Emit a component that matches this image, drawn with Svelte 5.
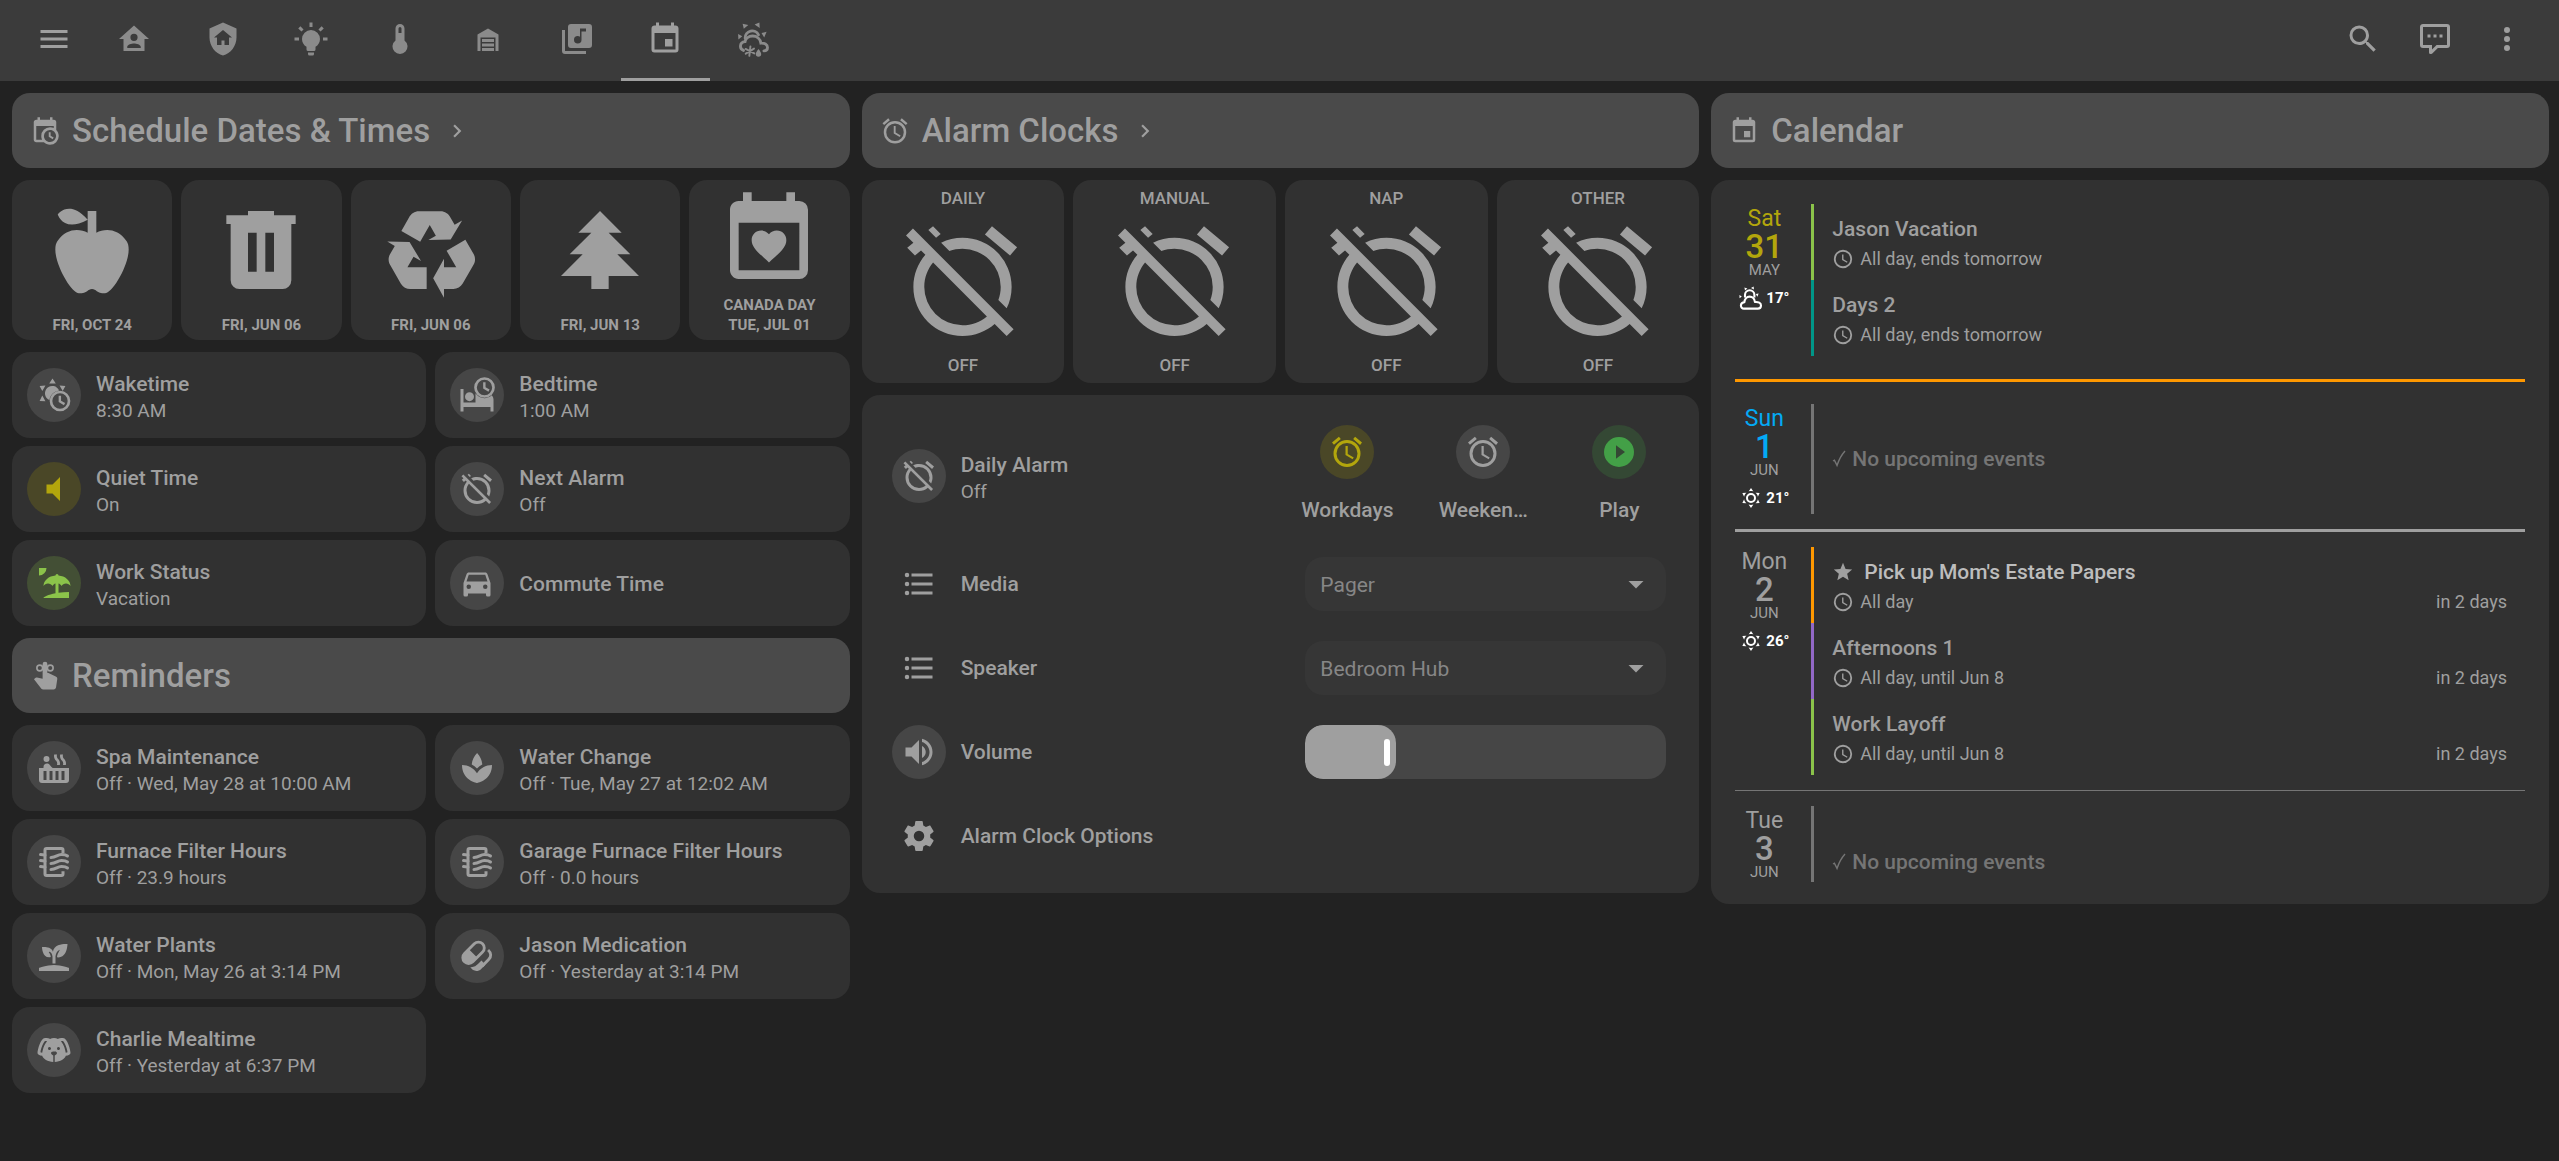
<script>
  const icons = {
    menu: 'M3,6H21V8H3V6M3,11H21V13H3V11M3,16H21V18H3V16Z',
    home: 'M12,3L2,12H5V20H19V12H22L12,3M12,8.5A2.4,2.4 0 0,1 14.4,10.9A2.4,2.4 0 0,1 12,13.3A2.4,2.4 0 0,1 9.6,10.9A2.4,2.4 0 0,1 12,8.5M12,15C13.5,15 16.5,15.75 16.5,17.25V18H7.5V17.25C7.5,15.75 10.5,15 12,15Z',
    shield: 'M11,13H13V16H16V11H18L12,6L6,11H8V16H11V13M12,1L21,5V11C21,16.55 17.16,21.74 12,23C6.84,21.74 3,16.55 3,11V5L12,1Z',
    bulb: 'M12,6A6,6 0 0,1 18,12C18,14.22 16.79,16.16 15,17.2V19A1,1 0 0,1 14,20H10A1,1 0 0,1 9,19V17.2C7.21,16.16 6,14.22 6,12A6,6 0 0,1 12,6M14,21V22A1,1 0 0,1 13,23H11A1,1 0 0,1 10,22V21H14M20,11H23V13H20V11M1,11H4V13H1V11M13,1V4H11V1H13M4.92,3.5L7.05,5.64L5.63,7.05L3.5,4.93L4.92,3.5M16.95,5.63L19.07,3.5L20.5,4.93L18.37,7.05L16.95,5.63Z',
    thermometer: 'M15 13V5A3 3 0 0 0 9 5V13A5 5 0 1 0 15 13M12 4A1 1 0 0 1 13 5V8H11V5A1 1 0 0 1 12 4Z',
    garage: 'M19,20H17V11H7V20H5V9L12,5L19,9V20M8,12H16V14H8V12M8,15H16V17H8V15M16,18V20H8V18H16Z',
    music: 'M4,6H2V20A2,2 0 0,0 4,22H18V20H4V6M20,2H8A2,2 0 0,0 6,4V16A2,2 0 0,0 8,18H20A2,2 0 0,0 22,16V4A2,2 0 0,0 20,2M18,7H15V12.5A2.5,2.5 0 0,1 12.5,15A2.5,2.5 0 0,1 10,12.5A2.5,2.5 0 0,1 12.5,10C13.07,10 13.58,10.19 14,10.5V5H18V7Z',
    calendar: 'M19,19H5V8H19M16,1V3H8V1H6V3H5C3.89,3 3,3.89 3,5V19A2,2 0 0,0 5,21H19A2,2 0 0,0 21,19V5C21,3.89 20.1,3 19,3H18V1M17,12H12V17H17V12Z',
    calendarClock: 'M15,13H16.5V15.82L18.94,17.23L18.19,18.53L15,16.69V13M19,8H5V19H9.67C9.24,18.09 9,17.07 9,16A7,7 0 0,1 16,9C17.07,9 18.09,9.24 19,9.67V8M5,21C3.89,21 3,20.1 3,19V5C3,3.89 3.89,3 5,3H6V1H8V3H16V1H18V3H19A2,2 0 0,1 21,5V11.1C22.24,12.36 23,14.09 23,16A7,7 0 0,1 16,23C14.09,23 12.36,22.24 11.1,21H5M16,11.15A4.85,4.85 0 0,0 11.15,16C11.15,18.68 13.32,20.85 16,20.85A4.85,4.85 0 0,0 20.85,16C20.85,13.32 18.68,11.15 16,11.15Z',
    magnify: 'M9.5,3A6.5,6.5 0 0,1 16,9.5C16,11.11 15.41,12.59 14.44,13.73L14.71,14H15.5L20.5,19L19,20.5L14,15.5V14.71L13.73,14.44C12.59,15.41 11.11,16 9.5,16A6.5,6.5 0 0,1 3,9.5A6.5,6.5 0 0,1 9.5,3M9.5,5C7,5 5,7 5,9.5C5,12 7,14 9.5,14C12,14 14,12 14,9.5C14,7 12,5 9.5,5Z',
    comment: 'M9,22A1,1 0 0,1 8,21V18H4A2,2 0 0,1 2,16V4C2,2.89 2.9,2 4,2H20A2,2 0 0,1 22,4V16A2,2 0 0,1 20,18H13.9L10.2,21.71C10,21.9 9.75,22 9.5,22H9M10,16V19.08L13.08,16H20V4H4V16H10M17,11H15V9H17V11M13,11H11V9H13V11M9,11H7V9H9V11Z',
    dots: 'M12,16A2,2 0 0,1 14,18A2,2 0 0,1 12,20A2,2 0 0,1 10,18A2,2 0 0,1 12,16M12,10A2,2 0 0,1 14,12A2,2 0 0,1 12,14A2,2 0 0,1 10,12A2,2 0 0,1 12,10M12,4A2,2 0 0,1 14,6A2,2 0 0,1 12,8A2,2 0 0,1 10,6A2,2 0 0,1 12,4Z',
    chevron: 'M8.59,16.58L13.17,12L8.59,7.41L10,6L16,12L10,18L8.59,16.58Z',
    apple: 'M20,10C22,13 17,22 15,22C13,22 13,21 12,21C11,21 11,22 9,22C7,22 2,13 4,10C6,7 9,7 11,8V5C5.38,8.07 4.11,3.78 4.11,3.78C4.11,3.78 6.77,0.19 11,5V3H13V8C15,7 18,7 20,10Z',
    trash: 'M9,3V4H4V6H5V19A2,2 0 0,0 7,21H17A2,2 0 0,0 19,19V6H20V4H15V3H9M9,8H11V17H9V8M13,8H15V17H13V8Z',
    recycle: 'M21.82,15.42L19.32,19.75C18.83,20.61 17.92,21.06 17,21H15V23L12.5,18.5L15,14V16H17.82L15.6,12.15L19.93,9.65L21.73,12.77C22.25,13.54 22.32,14.57 21.82,15.42M9.21,3.06H14.21C15.19,3.06 16.04,3.63 16.45,4.45L17.45,6.19L19.18,5.19L16.54,9.6L11.39,9.69L13.12,8.69L11.71,6.24L9.5,10.09L5.16,7.59L6.96,4.47C7.37,3.64 8.22,3.06 9.21,3.06M5.05,19.76L2.55,15.43C2.06,14.58 2.13,13.56 2.64,12.79L3.64,11.06L1.91,10.06L7.05,10.14L9.7,14.56L7.97,13.56L6.56,16H11V21H7.4C6.47,21.07 5.55,20.61 5.05,19.76Z',
    pine: 'M10,21V18H3L8,13H5L10,8H7L12,3L17,8H14L19,13H16L21,18H14V21H10Z',
    calendarHeart: 'M19,19V8H5V19H19M16,1H18V3H19A2,2 0 0,1 21,5V19A2,2 0 0,1 19,21H5C3.89,21 3,20.1 3,19V5C3,3.89 3.89,3 5,3H6V1H8V3H16V1M12,17.17L11.42,16.64C9.36,14.77 8,13.54 8,12.03C8,10.8 8.97,9.83 10.2,9.83C10.9,9.83 11.56,10.15 12,10.66C12.44,10.15 13.1,9.83 13.8,9.83C15.03,9.83 16,10.8 16,12.03C16,13.54 14.64,14.77 12.58,16.64L12,17.17Z',
    alarm: 'M12,20A7,7 0 0,1 5,13A7,7 0 0,1 12,6A7,7 0 0,1 19,13A7,7 0 0,1 12,20M12,4A9,9 0 0,0 3,13A9,9 0 0,0 12,22A9,9 0 0,0 21,13A9,9 0 0,0 12,4M12.5,8H11V14L15.75,16.85L16.5,15.62L12.5,13.25V8M7.88,3.39L6.6,1.86L2,5.71L3.29,7.24L7.88,3.39M22,5.72L17.4,1.86L16.11,3.39L20.71,7.25L22,5.72Z',
    alarmOff: 'M8,3.28L6.6,1.86L5.74,2.57L7.16,4M16.47,18.39C15.26,19.39 13.7,20 12,20A7,7 0 0,1 5,13C5,11.3 5.61,9.74 6.61,8.53M2.92,2.29L1.65,3.57L3,4.9L1.87,5.83L3.29,7.25L4.4,6.31L5.2,7.11C3.83,8.69 3,10.75 3,13A9,9 0 0,0 12,22C14.25,22 16.31,21.17 17.89,19.8L20.09,22L21.36,20.73L3.89,3.27L2.92,2.29M22,5.72L17.4,1.86L16.11,3.39L20.71,7.25L22,5.72M12,6A7,7 0 0,1 19,13C19,13.84 18.84,14.65 18.57,15.4L20.09,16.92C20.67,15.73 21,14.4 21,13A9,9 0 0,0 12,4C10.6,4 9.27,4.33 8.08,4.91L9.6,6.43C10.35,6.16 11.16,6 12,6Z',
    play: 'M10,16.5V7.5L16,12M12,2A10,10 0 0,0 2,12A10,10 0 0,0 12,22A10,10 0 0,0 22,12A10,10 0 0,0 12,2Z',
    list: 'M7,5H21V7H7V5M7,13V11H21V13H7M4,4.5A1.5,1.5 0 0,1 5.5,6A1.5,1.5 0 0,1 4,7.5A1.5,1.5 0 0,1 2.5,6A1.5,1.5 0 0,1 4,4.5M4,10.5A1.5,1.5 0 0,1 5.5,12A1.5,1.5 0 0,1 4,13.5A1.5,1.5 0 0,1 2.5,12A1.5,1.5 0 0,1 4,10.5M7,19V17H21V19H7M4,16.5A1.5,1.5 0 0,1 5.5,18A1.5,1.5 0 0,1 4,19.5A1.5,1.5 0 0,1 2.5,18A1.5,1.5 0 0,1 4,16.5Z',
    volumeHigh: 'M14,3.23V5.29C16.89,6.15 19,8.83 19,12C19,15.17 16.89,17.84 14,18.7V20.77C18,19.86 21,16.28 21,12C21,7.72 18,4.14 14,3.23M16.5,12C16.5,10.23 15.5,8.71 14,7.97V16C15.5,15.29 16.5,13.76 16.5,12M3,9V15H7L12,20V4L7,9H3Z',
    volumeLow: 'M7,9V15H11L16,20V4L11,9H7Z',
    cog: 'M12,15.5A3.5,3.5 0 0,1 8.5,12A3.5,3.5 0 0,1 12,8.5A3.5,3.5 0 0,1 15.5,12A3.5,3.5 0 0,1 12,15.5M19.43,12.97C19.47,12.65 19.5,12.33 19.5,12C19.5,11.67 19.47,11.34 19.43,11L21.54,9.37C21.73,9.22 21.78,8.95 21.66,8.73L19.66,5.27C19.54,5.05 19.27,4.96 19.05,5.05L16.56,6.05C16.04,5.66 15.5,5.32 14.87,5.07L14.5,2.42C14.46,2.18 14.25,2 14,2H10C9.75,2 9.54,2.18 9.5,2.42L9.13,5.07C8.5,5.32 7.96,5.66 7.44,6.05L4.95,5.05C4.73,4.96 4.46,5.05 4.34,5.27L2.34,8.73C2.21,8.95 2.27,9.22 2.46,9.37L4.57,11C4.53,11.34 4.5,11.67 4.5,12C4.5,12.33 4.53,12.65 4.57,12.97L2.46,14.63C2.27,14.78 2.21,15.05 2.34,15.27L4.34,18.73C4.46,18.95 4.73,19.03 4.95,18.95L7.44,17.94C7.96,18.34 8.5,18.68 9.13,18.93L9.5,21.58C9.54,21.82 9.75,22 10,22H14C14.25,22 14.46,21.82 14.5,21.58L14.87,18.93C15.5,18.67 16.04,18.34 16.56,17.94L19.05,18.95C19.27,19.03 19.54,18.95 19.66,18.73L21.66,15.27C21.78,15.05 21.73,14.78 21.54,14.63L19.43,12.97Z',
    car: 'M5,11L6.5,6.5H17.5L19,11M17.5,16A1.5,1.5 0 0,1 16,14.5A1.5,1.5 0 0,1 17.5,13A1.5,1.5 0 0,1 19,14.5A1.5,1.5 0 0,1 17.5,16M6.5,16A1.5,1.5 0 0,1 5,14.5A1.5,1.5 0 0,1 6.5,13A1.5,1.5 0 0,1 8,14.5A1.5,1.5 0 0,1 6.5,16M18.92,6C18.72,5.42 18.16,5 17.5,5H6.5C5.84,5 5.28,5.42 5.08,6L3,12V20A1,1 0 0,0 4,21H5A1,1 0 0,0 6,20V19H18V20A1,1 0 0,0 19,21H20A1,1 0 0,0 21,20V12L18.92,6Z',
    beach: 'M15,18.54C17.13,18.21 19.5,18 22,18V22H5C5,21.35 8.2,19.86 13,18.9V12.4C12.16,12.65 11.45,13.21 11,13.95C10.39,12.93 9.27,12.25 8,12.25C6.73,12.25 5.61,12.93 5,13.95C5.03,10.37 8.5,7.43 13,7.04V7A1,1 0 0,1 14,6A1,1 0 0,1 15,7V7.04C19.5,7.43 22.96,10.37 23,13.95C22.39,12.93 21.27,12.25 20,12.25C18.73,12.25 17.61,12.93 17,13.95C16.55,13.21 15.84,12.65 15,12.39V18.54M7,2A5,5 0 0,1 2,7V2H7Z',
    hotTub: 'M7,4A2,2 0 0,1 9,6A2,2 0 0,1 7,8A2,2 0 0,1 5,6A2,2 0 0,1 7,4M11.15,12H22V20A2,2 0 0,1 20,22H4A2,2 0 0,1 2,20V12H5V11.25C5,10 6,9 7.25,9H7.28C7.62,9 7.95,9.09 8.24,9.23C8.5,9.35 8.74,9.5 8.93,9.73L10.33,11.28C10.56,11.54 10.84,11.78 11.15,12M7,20V14H5V20H7M11,20V14H9V20H11M15,20V14H13V20H15M19,20V14H17V20H19M18.65,5.86C19.68,6.86 20.16,8.21 19.95,9.57L19.89,10H18L18.09,9.41C18.24,8.62 18,7.83 17.42,7.21L17.35,7.15C16.32,6.14 15.85,4.79 16.05,3.43L16.11,3H18L17.91,3.59C17.76,4.38 18,5.17 18.58,5.79L18.65,5.86M14.65,5.86C15.68,6.86 16.16,8.21 15.95,9.57L15.89,10H14L14.09,9.41C14.24,8.62 14,7.83 13.42,7.21L13.35,7.15C12.32,6.14 11.85,4.79 12.05,3.43L12.11,3H14L13.91,3.59C13.76,4.38 14,5.17 14.58,5.79L14.65,5.86Z',
    spa: 'M15.5,9.63C15.31,6.84 14.18,4.12 12.06,2C9.92,4.14 8.74,6.86 8.5,9.63C9.79,10.31 10.97,11.19 12,12.26C13.03,11.2 14.21,10.32 15.5,9.63M12,15.45C9.85,12.17 6.18,10 2,10C2,20 11.32,21.89 12,22C12.68,21.88 22,20 22,10C17.82,10 14.15,12.17 12,15.45Z',
    sprout: 'M2,22V20C2,20 7,18 12,18C17,18 22,20 22,20V22H2M11.3,9.1C10.1,5.2 4,6.1 4,6.1C4,6.1 4.2,13.9 9.9,12.7C9.5,9.8 8,9 8,9C10.8,9 11,12.4 11,12.4V17C11.3,17 11.7,17 12,17C12.3,17 12.7,17 13,17V12.8C13,12.8 13,8.9 16,7.9C16,7.9 14,10.9 14,12.9C21,13.6 21,4 21,4C21,4 12.1,3 11.3,9.1Z',
    dog: 'M18,4C16.29,4 15.25,4.33 14.65,4.61C13.88,4.23 13,4 12,4C11,4 10.12,4.23 9.35,4.61C8.75,4.33 7.71,4 6,4C3,4 1,12 1,14C1,14.83 2.32,15.59 4.14,15.9C4.78,18.14 7.8,19.85 11.5,20V15.72C10.91,15.35 10,14.68 10,14C10,13 12,13 12,13C12,13 14,13 14,14C14,14.68 13.09,15.35 12.5,15.72V20C16.2,19.85 19.22,18.14 19.86,15.9C21.68,15.59 23,14.83 23,14C23,12 21,4 18,4M4.15,13.87C3.65,13.75 3.26,13.61 3,13.5C3.25,10.73 5.2,6.4 6.05,6C6.59,6 7,6.06 7.37,6.11C5.27,8.42 4.44,12.04 4.15,13.87M9,12A1,1 0 0,1 8,11C8,10.46 8.45,10 9,10A1,1 0 0,1 10,11C10,11.56 9.55,12 9,12M15,12A1,1 0 0,1 14,11C14,10.46 14.45,10 15,10A1,1 0 0,1 16,11C16,11.56 15.55,12 15,12M19.85,13.87C19.56,12.04 18.73,8.42 16.63,6.11C17,6.06 17.41,6 17.95,6C18.8,6.4 20.75,10.73 21,13.5C20.75,13.61 20.36,13.75 19.85,13.87Z',
    clock: 'M12,20A8,8 0 0,0 20,12A8,8 0 0,0 12,4A8,8 0 0,0 4,12A8,8 0 0,0 12,20M12,2A10,10 0 0,1 22,12A10,10 0 0,1 12,22C6.47,22 2,17.5 2,12A10,10 0 0,1 12,2M12.5,7V12.25L17,14.92L16.25,16.15L11,13V7H12.5Z',
    star: 'M12,17.27L18.18,21L16.54,13.97L22,9.24L14.81,8.62L12,2L9.19,8.62L2,9.24L7.45,13.97L5.82,21L12,17.27Z',
    arrow: 'M7,10L12,15L17,10H7Z',
    sunClock: 'M9,15.4A4.9,4.9 0 1,1 15.4,9A7,7 0 0,0 9,15.4M11,1L13.2,4.3H8.8L11,1M2.4,6L6.3,5.7L4.2,9.4L2.4,6M19.6,6L17.8,9.4L15.7,5.7L19.6,6M2.4,16L4.2,12.4L6.3,16.1L2.4,16M16,9.1A6.9,6.9 0 1,1 16,22.9A6.9,6.9 0 1,1 16,9.1M16,10.9A5.1,5.1 0 1,0 16,21.1A5.1,5.1 0 1,0 16,10.9M15.1,12.5H16.7V15.8L19.4,17.4L18.6,18.8L15.1,16.7V12.5Z',
    bedClock: 'M1,8H3V17H11V10.9A7,7 0 0,0 21.8,12.1C22.6,12.9 23,13.9 23,15V23H21V20H3V23H1V8M7,10.1A3,3 0 1,1 7,16.1A3,3 0 1,1 7,10.1M17,.1A6.9,6.9 0 1,1 17,13.9A6.9,6.9 0 1,1 17,.1M17,1.9A5.1,5.1 0 1,0 17,12.1A5.1,5.1 0 1,0 17,1.9M16.1,3.5H17.7V6.8L20.4,8.4L19.6,9.8L16.1,7.7V3.5Z',
    sunny: 'M12,7A5,5 0 0,1 17,12A5,5 0 0,1 12,17A5,5 0 0,1 7,12A5,5 0 0,1 12,7M12,9A3,3 0 0,0 9,12A3,3 0 0,0 12,15A3,3 0 0,0 15,12A3,3 0 0,0 12,9M12,2L14.39,5.42C13.65,5.15 12.84,5 12,5C11.16,5 10.35,5.15 9.61,5.42L12,2M3.34,7L7.5,6.65C6.9,7.16 6.36,7.78 5.94,8.5C5.5,9.24 5.25,10 5.11,10.79L3.34,7M3.36,17L5.12,13.23C5.26,14 5.53,14.78 5.95,15.5C6.37,16.24 6.91,16.86 7.5,17.37L3.36,17M20.65,7L18.88,10.79C18.74,10 18.47,9.23 18.05,8.5C17.63,7.78 17.1,7.15 16.5,6.64L20.65,7M20.64,17L16.5,17.36C17.09,16.85 17.62,16.22 18.04,15.5C18.46,14.77 18.73,14 18.87,13.21L20.64,17M12,22L9.59,18.56C10.33,18.83 11.14,19 12,19C12.82,19 13.63,18.83 14.37,18.56L12,22Z'
  };

  const tabs = [
    ['home', 'Home'],
    ['shield', 'Security'],
    ['bulb', 'Lights'],
    ['thermometer', 'Climate'],
    ['garage', 'Garage'],
    ['music', 'Media'],
    ['calendar', 'Schedule'],
    ['mixedWeather', 'Weather']
  ];
  let activeTab = $state('calendar');

  const dates = [
    { icon: 'apple', lines: ['FRI, OCT 24'] },
    { icon: 'trash', lines: ['FRI, JUN 06'] },
    { icon: 'recycle', lines: ['FRI, JUN 06'] },
    { icon: 'pine', lines: ['FRI, JUN 13'] },
    { icon: 'calendarHeart', lines: ['CANADA DAY', 'TUE, JUL 01'] }
  ];

  const times = [
    { icon: 'sunClock', name: 'Waketime', state: '8:30 AM' },
    { icon: 'bedClock', name: 'Bedtime', state: '1:00 AM' },
    { icon: 'volumeLow', name: 'Quiet Time', state: 'On', tone: 'yellow' },
    { icon: 'alarmOff', name: 'Next Alarm', state: 'Off' },
    { icon: 'beach', name: 'Work Status', state: 'Vacation', tone: 'lime' },
    { icon: 'car', name: 'Commute Time' }
  ];

  const reminders = [
    { icon: 'hotTub', name: 'Spa Maintenance', state: 'Off · Wed, May 28 at 10:00 AM' },
    { icon: 'spa', name: 'Water Change', state: 'Off · Tue, May 27 at 12:02 AM' },
    { icon: 'airFilter', name: 'Furnace Filter Hours', state: 'Off · 23.9 hours' },
    { icon: 'airFilter', name: 'Garage Furnace Filter Hours', state: 'Off · 0.0 hours' },
    { icon: 'sprout', name: 'Water Plants', state: 'Off · Mon, May 26 at 3:14 PM' },
    { icon: 'pills', name: 'Jason Medication', state: 'Off · Yesterday at 3:14 PM' },
    { icon: 'dog', name: 'Charlie Mealtime', state: 'Off · Yesterday at 6:37 PM' }
  ];

  const alarms = ['DAILY', 'MANUAL', 'NAP', 'OTHER'];
  const chips = [
    { icon: 'alarm', name: 'Workdays', tone: 'yellow' },
    { icon: 'alarm', name: 'Weeken…', tone: '' },
    { icon: 'play', name: 'Play', tone: 'green' }
  ];

  let media = $state('Pager');
  let speaker = $state('Bedroom Hub');
  let volume = $state(25);

  const days = [
    {
      name: 'Sat', num: 31, month: 'MAY', tone: 'today', weather: 'partly', temp: '17°', rule: 'week',
      events: [
        { title: 'Jason Vacation', time: 'All day, ends tomorrow', tone: 'lime' },
        { title: 'Days 2', time: 'All day, ends tomorrow', tone: 'teal' }
      ]
    },
    { name: 'Sun', num: 1, month: 'JUN', tone: 'weekend', weather: 'sunny', temp: '21°', rule: 'month', events: [] },
    {
      name: 'Mon', num: 2, month: 'JUN', tone: '', weather: 'sunny', temp: '26°', rule: 'plain',
      events: [
        { title: "Pick up Mom's Estate Papers", time: 'All day', due: 'in 2 days', tone: 'orange', star: true },
        { title: 'Afternoons 1', time: 'All day, until Jun 8', due: 'in 2 days', tone: 'purple' },
        { title: 'Work Layoff', time: 'All day, until Jun 8', due: 'in 2 days', tone: 'lime' }
      ]
    },
    { name: 'Tue', num: 3, month: 'JUN', tone: '', rule: '', events: [] }
  ];
</script>

{#snippet icon(name, size = 'md')}
  <svg class="icon {size}" viewBox="0 0 24 24" aria-hidden="true">
    {#if name === 'mixedWeather'}
      <path d="M4.4,1.8L8.2,2.6L5.2,5.2ZM12.4,2.4L15.6,1L15.8,4.6ZM1.4,8.6L4.2,10.2L1.6,12.4ZM20.4,7.2L18.8,11L17,8Z" />
      <g fill="none" stroke="currentColor" stroke-width="1.9" stroke-linecap="round">
        <path d="M6.1,11.4A4.7,4.7 0 0,1 15,9.2" />
        <path d="M5,19.6C3.6,19 2.9,17.8 3,16.6C3.1,15 4.3,14 6,13.8C6.4,11.5 8.6,10 11,10C14,10 16.2,12 16.6,14.8C18.9,14.6 21,15.6 21,17.6C21,19 20.2,19.8 18.6,19.9" />
      </g>
      <path fill="none" stroke="currentColor" stroke-width="1.3" stroke-linecap="round" d="M9.6,17L8.9,23.2M6.4,18.6L12.2,21.6M12,18.4L6.5,21.8" />
      <path d="M15,18.6C16.2,20.2 16.8,21 16.8,22A1.8,1.8 0 0,1 13.2,22C13.2,21 13.8,20.2 15,18.6Z" />
    {:else if name === 'partly'}
      <path d="M5.4,1.6L8.4,2.4L6,4.6ZM12,2L14.6,.6L15,3.6ZM.4,9L2.8,10.4L.6,12.2ZM19.6,7.6L18.4,10.8L16.8,8Z" />
      <g fill="none" stroke="currentColor" stroke-width="2.1" stroke-linejoin="round">
        <path d="M6,11.6V9A4.7,4.7 0 0,1 15.4,9V11.6" />
        <path d="M5,22.6C3,22.6 1.9,21.2 1.9,19.6C1.9,17.6 3.4,16.4 5.4,16.3C5.6,13 7.8,10.6 10.6,10.6C13.4,10.6 15.6,12.8 15.9,16C19.4,15.6 22,17 22,19.4C22,21.4 20.6,22.6 18.8,22.6Z" />
      </g>
    {:else if name === 'pills'}
      <g transform="rotate(-45 9.7 9.9)">
        <rect x="1.2" y="6" width="17" height="7.8" rx="3.9" fill="none" stroke="currentColor" stroke-width="1.9" />
        <path d="M9.2,6H5.1A3.9,3.9 0 0,0 5.1,13.8H9.2Z" />
      </g>
      <path fill="none" stroke="currentColor" stroke-width="1.9" d="M19.4,8C21.6,10 21.6,12.4 19.9,14.2L15.4,18.8" />
      <path d="M7.6,19.4C9.9,19.6 11.4,18.6 12.8,17.2L15,15L17.6,17.8L14.8,20.6C12.6,22.7 9.2,22.4 7.6,19.4Z" />
    {:else if name === 'airFilter'}
      <g fill="none" stroke="currentColor" stroke-width="2" stroke-linecap="round">
        <path stroke-linecap="butt" d="M18,6.2V4A1,1 0 0,0 17,3H7A1,1 0 0,0 6,4V20A1,1 0 0,0 7,21H17A1,1 0 0,0 18,20V18.2" />
        <path d="M3,7C4.2,7 5.2,7.2 6,7.4M3,11C4.2,11 5.2,11.2 6,11.4M3,15C4.2,15 5.2,15.2 6,15.4" />
        <path d="M10,9C13.6,9 14,7 17,7C19.8,7 21,8 21,8M10,13C13.6,13 14,11 17,11C19.8,11 21,12 21,12M10,17C13.6,17 14,15 17,15C19.8,15 21,16 21,16" />
      </g>
    {:else if name === 'reminder'}
      <path d="M12,.5A1.9,1.9 0 0,1 13.9,2.4V9.6H14.8L20.6,12.4C21.5,12.8 22,13.6 21.8,14.6L20.8,21.2C20.6,22.1 19.9,22.7 19,22.7H10.6C10,22.7 9.5,22.5 9.1,22.1L3.2,14.6L4,13.7C4.5,13.2 5,13 5.6,13.2L10.1,14.2V2.4A1.9,1.9 0 0,1 12,.5Z" />
      <g fill="none" stroke="currentColor" stroke-width="1.3">
        <circle cx="7.8" cy="5.6" r="2.3" />
        <circle cx="16.2" cy="5.6" r="2.3" />
      </g>
    {:else}
      <path d={icons[name]} fill-rule={name === 'bedClock' || name === 'sunClock' ? 'nonzero' : 'evenodd'} />
    {/if}
  </svg>
{/snippet}

{#snippet tile(item)}
  <button class="card tile">
    <span class="circle {item.tone ?? ''}">{@render icon(item.icon)}</span>
    <span class="info">
      <span class="name">{item.name}</span>
      {#if item.state}<span class="state">{item.state}</span>{/if}
    </span>
  </button>
{/snippet}

<header>
  <button class="tool" aria-label="Menu">{@render icon('menu')}</button>
  <nav>
    {#each tabs as [name, label]}
      <button
        class="tab"
        class:active={activeTab === name}
        aria-label={label}
        onclick={() => (activeTab = name)}
      >{@render icon(name)}</button>
    {/each}
  </nav>
  <button class="tool" aria-label="Search">{@render icon('magnify')}</button>
  <button class="tool" aria-label="Assist">{@render icon('comment')}</button>
  <button class="tool" aria-label="More">{@render icon('dots')}</button>
</header>

<main>
  <section>
    <h2>{@render icon('calendarClock', 'sm')}<a href="#schedule">Schedule Dates &amp; Times{@render icon('chevron', 'xs')}</a></h2>
    <div class="dates">
      {#each dates as d}
        <button class="card date">
          <span class="art">{@render icon(d.icon, 'lg')}</span>
          {#each d.lines as line}<span class="caption">{line}</span>{/each}
        </button>
      {/each}
    </div>
    <div class="tiles">
      {#each times as t}{@render tile(t)}{/each}
    </div>
    <h2>{@render icon('reminder', 'sm')}<span>Reminders</span></h2>
    <div class="tiles">
      {#each reminders as r}{@render tile(r)}{/each}
    </div>
  </section>

  <section>
    <h2>{@render icon('alarm', 'sm')}<a href="#alarms">Alarm Clocks{@render icon('chevron', 'xs')}</a></h2>
    <div class="alarms">
      {#each alarms as a}
        <button class="card alarm">
          <span class="label">{a}</span>
          {@render icon('alarmOff', 'xl')}
          <span class="label">OFF</span>
        </button>
      {/each}
    </div>
    <div class="card rows">
      <div class="row daily">
        <span class="circle">{@render icon('alarmOff')}</span>
        <span class="info">
          <span class="name">Daily Alarm</span>
          <span class="state">Off</span>
        </span>
        <div class="chips">
          {#each chips as c}
            <button class="chip">
              <span class="circle {c.tone}">{@render icon(c.icon)}</span>
              <span class="name">{c.name}</span>
            </button>
          {/each}
        </div>
      </div>
      <div class="row">
        <span class="circle bare">{@render icon('list')}</span>
        <label class="name" for="media">Media</label>
        <div class="control">
          <select id="media" bind:value={media}>
            <option>Pager</option>
            <option>Radio</option>
          </select>
          {@render icon('arrow')}
        </div>
      </div>
      <div class="row">
        <span class="circle bare">{@render icon('list')}</span>
        <label class="name" for="speaker">Speaker</label>
        <div class="control">
          <select id="speaker" bind:value={speaker}>
            <option>Bedroom Hub</option>
            <option>Kitchen Hub</option>
          </select>
          {@render icon('arrow')}
        </div>
      </div>
      <div class="row">
        <span class="circle">{@render icon('volumeHigh')}</span>
        <label class="name" for="volume">Volume</label>
        <div class="control slider">
          <div class="fill" style:width="{volume}%"></div>
          <input id="volume" type="range" min="0" max="100" bind:value={volume} />
        </div>
      </div>
      <button class="row">
        <span class="circle bare">{@render icon('cog')}</span>
        <span class="name">Alarm Clock Options</span>
      </button>
    </div>
  </section>

  <section>
    <h2>{@render icon('calendar', 'sm')}<span>Calendar</span></h2>
    <div class="card agenda">
      {#each days as d}
        <div class="day {d.rule}">
          <div class="when {d.tone}">
            <span class="weekday">{d.name}</span>
            <span class="num">{d.num}</span>
            <span class="month">{d.month}</span>
            {#if d.weather}
              <span class="weather">{@render icon(d.weather, 'wx')}{d.temp}</span>
            {/if}
          </div>
          <div class="events">
            {#each d.events as e}
              <div class="event {e.tone}">
                <span class="title" class:starred={e.star}>
                  {#if e.star}{@render icon('star', 'in')}{/if}{e.title}
                </span>
                <span class="time">{@render icon('clock', 'in')}<span>{e.time}</span>
                  {#if e.due}<span class="due">{e.due}</span>{/if}
                </span>
              </div>
            {:else}
              <div class="event none" class:low={!d.weather}>
                <span class="title">
                  <svg class="check" viewBox="0 0 14 18" aria-hidden="true"><path d="M1,11L2.4,10.2L5,15.4C7,9.6 9.4,5 13,1" /></svg>
                  No upcoming events
                </span>
              </div>
            {/each}
          </div>
        </div>
      {/each}
    </div>
  </section>
</main>

<style>
  :global(body) {
    background: #222;
    color: #9f9f9f;
    font-family: Roboto, 'Liberation Sans', sans-serif;
  }

  :global(*) {
    box-sizing: border-box;
  }

  button {
    border: 0;
    padding: 0;
    margin: 0;
    background: none;
    color: inherit;
    font: inherit;
    text-align: left;
    cursor: pointer;
  }

  .icon {
    display: block;
    flex: none;
    fill: currentColor;
    width: 36px;
    height: 36px;
  }
  .icon.xs { width: 26px; height: 26px; }
  .icon.sm { width: 30px; height: 30px; }
  .icon.lg { width: 104px; height: 104px; }
  .icon.xl { width: 131px; height: 131px; }
  .icon.in { width: 22px; height: 22px; }
  .icon.wx { width: 24px; height: 24px; }

  header {
    display: flex;
    background: #3b3b3b;
    padding: 0 16px 0 18px;
  }
  .tool {
    width: 72px;
    height: 78px;
    display: grid;
    place-items: center;
  }
  nav {
    display: grid;
    grid-template-columns: repeat(8, 1fr);
    width: 708px;
    margin-right: auto;
  }
  .tab {
    height: 81px;
    display: grid;
    place-items: center;
    color: #8b8b8b;
    border-bottom: 3px solid transparent;
  }
  .tab.active {
    color: #9f9f9f;
    border-bottom-color: #9f9f9f;
  }

  main {
    display: grid;
    grid-template-columns: repeat(3, minmax(0, 1fr));
    gap: 12px;
    align-items: start;
    padding: 12px 10px 12px 12px;
  }
  section {
    display: flex;
    flex-direction: column;
    gap: 12px;
  }
  h2 {
    display: flex;
    align-items: center;
    gap: 12px;
    margin: 0;
    height: 75px;
    padding: 0 18px;
    border-radius: 18px;
    background: #4a4a4a;
    font-size: 33px;
    font-weight: 500;
    line-height: 40px;
  }
  h2 a {
    display: flex;
    align-items: center;
    gap: 14px;
    color: inherit;
    text-decoration: none;
  }

  .card {
    background: #313131;
    border-radius: 18px;
  }

  .dates {
    display: grid;
    grid-template-columns: repeat(5, 1fr);
    gap: 9px;
  }
  .date {
    display: flex;
    flex-direction: column;
    align-items: center;
    height: 160px;
    padding: 5px 0;
  }
  .art {
    flex: 1;
    display: flex;
    align-items: center;
  }
  .caption {
    font-size: 15px;
    font-weight: 700;
    line-height: 20px;
  }

  .tiles {
    display: grid;
    grid-template-columns: repeat(2, 1fr);
    gap: 8px 9px;
  }
  .tile {
    display: flex;
    align-items: center;
    gap: 15px;
    height: 86px;
    padding: 0 15px;
  }
  .circle {
    flex: none;
    display: grid;
    place-items: center;
    width: 54px;
    height: 54px;
    border-radius: 50%;
    background: #464646;
  }
  .circle.bare { background: none; }
  .circle.yellow { background: #4a4727; color: #b3a60c; }
  .circle.lime { background: #434f35; color: #8bc34a; }
  .circle.green { background: #344834; color: #43a047; }
  .info {
    display: flex;
    flex-direction: column;
    padding-top: 2px;
  }
  .name {
    font-size: 21px;
    font-weight: 500;
    line-height: 30px;
  }
  .state {
    font-size: 19px;
    line-height: 24px;
  }

  .alarms {
    display: grid;
    grid-template-columns: repeat(4, 1fr);
    gap: 9px;
  }
  .alarm {
    display: flex;
    flex-direction: column;
    align-items: center;
    justify-content: space-between;
    height: 203px;
    padding: 5px 0;
  }
  .label {
    font-size: 17px;
    font-weight: 500;
    line-height: 26px;
  }

  .rows {
    padding: 15px 0;
  }
  .row {
    display: flex;
    align-items: center;
    gap: 15px;
    width: 100%;
    height: 84px;
    padding: 0 33px 0 30px;
  }
  .row.daily { height: 132px; }
  .chips {
    display: flex;
    gap: 42px;
    margin-left: auto;
    padding-bottom: 2px;
  }
  .chip {
    display: flex;
    flex-direction: column;
    align-items: center;
    gap: 16px;
    width: 94px;
  }
  .control {
    position: relative;
    width: 361px;
    height: 54px;
    margin-left: auto;
    border-radius: 18px;
    overflow: hidden;
  }
  .control .icon {
    position: absolute;
    right: 12px;
    top: 9px;
    pointer-events: none;
  }
  select {
    appearance: none;
    width: 100%;
    height: 100%;
    border: 0;
    padding: 2px 15px 0;
    background: #363636;
    color: #868686;
    font: 400 21px/30px Roboto, sans-serif;
  }
  .slider { background: #464646; }
  .fill {
    display: flex;
    align-items: center;
    justify-content: flex-end;
    height: 100%;
    padding-right: 6px;
    border-radius: 18px;
    background: #9f9f9f;
  }
  .fill::after {
    content: '';
    width: 6px;
    height: 27px;
    border-radius: 3px;
    background: #fff;
  }
  input {
    position: absolute;
    inset: 0;
    width: 100%;
    height: 100%;
    margin: 0;
    opacity: 0;
  }

  .agenda {
    padding: 24px 24px 22px;
  }
  .day {
    display: flex;
    padding-bottom: 15px;
    margin-bottom: 15px;
  }
  .day:last-child { padding: 0; margin: 0; }
  .day.week {
    padding-bottom: 23px;
    margin-bottom: 22px;
    border-bottom: 3px solid #ff9800;
  }
  .day.month { border-bottom: 3px solid #9f9f9f; }
  .day.plain { border-bottom: 1px solid #757575; }
  .when {
    display: flex;
    flex-direction: column;
    align-items: center;
    width: 58px;
    margin-right: 18px;
    padding-top: 1px;
  }
  .weekday {
    font-size: 23px;
    line-height: 28px;
  }
  .num {
    font-size: 33px;
    font-weight: 500;
    line-height: 28px;
  }
  .month {
    font-size: 15px;
    line-height: 19px;
  }
  .today .weekday, .today .num { color: #b3a60c; }
  .weekend .weekday, .weekend .num { color: #03a9f4; }
  .weather {
    display: flex;
    align-items: center;
    gap: 3px;
    padding: 6px 0 4px;
    color: #fff;
    font-size: 15px;
    font-weight: 700;
    line-height: 24px;
  }
  .events {
    flex: 1;
    display: flex;
    flex-direction: column;
  }
  .event {
    display: flex;
    flex-direction: column;
    height: 76px;
    padding: 10px 18px 6px;
    border-left: 3px solid #757575;
  }
  .event.lime { border-color: #8bc34a; }
  .event.teal { border-color: #009688; }
  .event.orange { border-color: #ff9800; }
  .event.purple { border-color: #9268c6; }
  .event.none {
    flex: 1;
    height: auto;
    min-height: 76px;
    justify-content: center;
    padding: 0 18px;
    color: #757575;
  }
  .event.low {
    justify-content: flex-end;
    padding-bottom: 5px;
  }
  .title {
    display: flex;
    align-items: center;
    gap: 10px;
    font-size: 21px;
    font-weight: 500;
    line-height: 30px;
  }
  .none .title { gap: 6px; }
  .starred { color: #bdbdbd; }
  .starred .icon { color: #9f9f9f; }
  .check {
    width: 14px;
    height: 18px;
    fill: none;
    stroke: currentColor;
    stroke-width: 1.4;
  }
  .time {
    display: flex;
    align-items: center;
    gap: 6px;
    font-size: 18px;
    line-height: 30px;
  }
  .due { margin-left: auto; }
</style>
